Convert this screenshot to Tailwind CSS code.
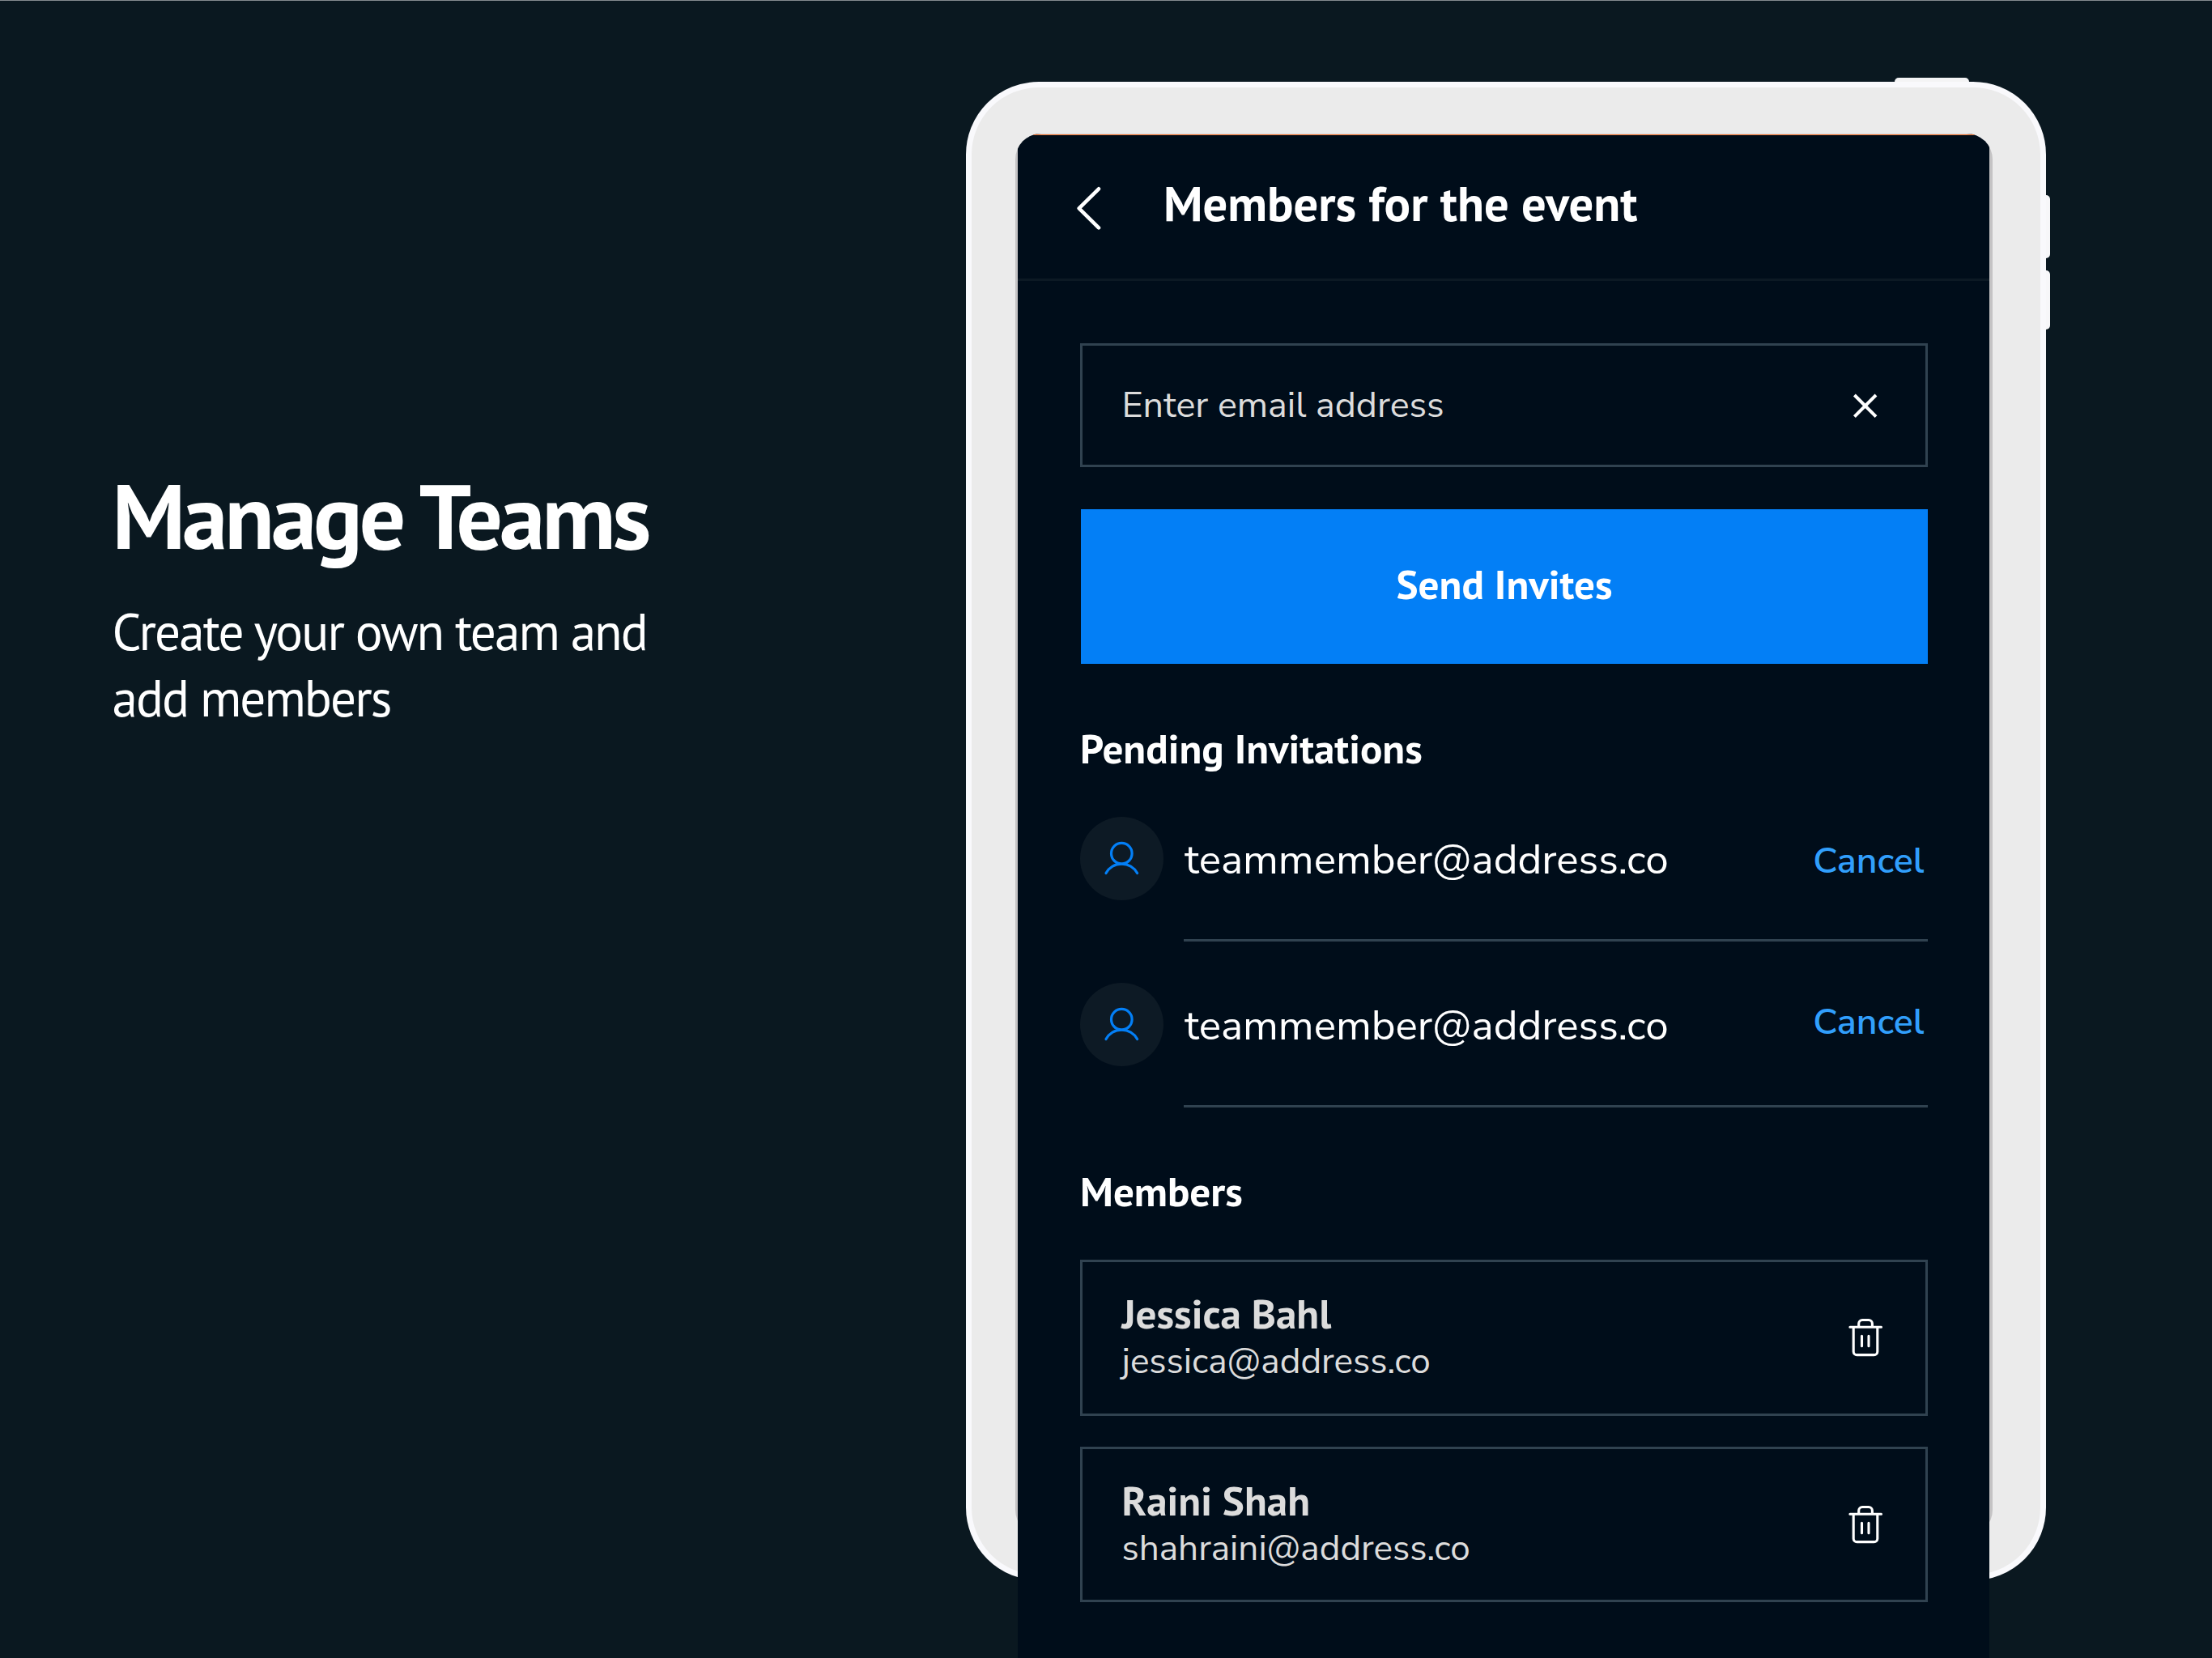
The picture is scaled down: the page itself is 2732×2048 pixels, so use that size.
<!DOCTYPE html>
<html lang="en">
<head>
<meta charset="utf-8">
<title>Manage Teams</title>
<script src="https://cdn.jsdelivr.net/npm/@tailwindcss/browser@4"></script>
</head>
<body class="bg-[#0a1820]">
<main class="relative flex h-[2048px] w-[2732px] overflow-hidden bg-[#0a1820] font-['PT_Sans','Noto_Sans',sans-serif] text-white">
  <div class="absolute inset-x-0 top-0 h-px bg-[#848b8f]"></div>

  <section class="w-[1193px] shrink-0 pt-[576px] pl-[138.5px]">
    <h1 class="text-[113.4px] leading-[120px] font-bold tracking-[-4.1px] whitespace-nowrap">Manage Teams</h1>
    <p class="mt-[43px] text-[63.3px] leading-[82px] tracking-[-2px]">Create your own team and<br>add members</p>
  </section>

  <section class="relative w-[1334px] shrink-0 pt-[165px] pl-[61px]">
    <!-- tablet body and hardware buttons -->
    <div class="absolute top-[96px] left-[1147px] h-[20px] w-[92px] rounded-t-[5px] bg-[#f4f4f5]"></div>
    <div class="absolute top-[241px] left-[1320px] h-[78px] w-[19px] rounded-r-[5px] bg-[#f7f7f9]"></div>
    <div class="absolute top-[334px] left-[1320px] h-[73px] w-[19px] rounded-r-[5px] bg-[#f7f7f9]"></div>
    <div class="absolute top-[101px] left-0 h-[1851px] w-[1334px] rounded-[90px] border-[7px] border-[#f9f9fc] bg-[#ebebeb]"></div>
    <div class="absolute top-[165px] left-[61px] h-[1732px] w-[1207px] rounded-[32px] bg-[#c4c3c4]"></div>

    <!-- screen -->
    <div class="relative h-[1883px] w-[1207px] overflow-hidden rounded-t-[32px] pl-[3px]">
      <div class="h-[1883px] w-[1200px] bg-[#000d1a]">
        <div class="h-px bg-[#d5d3d6]"></div>
        <div class="h-px bg-[#f0702a]"></div>
        <header class="flex h-[180px] items-start border-b-[3px] border-[#0c1924] pl-[67px]">
          <svg class="mt-[58px] h-[64px] w-[40px]" viewBox="0 0 40 64" fill="none" stroke="#fff" stroke-width="4.6" stroke-linecap="round" stroke-linejoin="round"><path d="M33 8.3 8.7 32.3 33 56.4"/></svg>
          <h2 class="mt-[54px] ml-[73px] text-[60.6px] leading-[60px] font-bold whitespace-nowrap">Members for the event</h2>
        </header>

        <div class="flex flex-col pt-[77px] pr-[76px] pl-[77px]">
          <div class="flex h-[153px] items-center justify-between border-[3px] border-[#304250] pr-[44px] pl-[48.5px]">
            <span class="font-['Nunito_Sans','Lato',sans-serif] text-[44.8px] leading-[60px] text-[#dcdcdc]">Enter email address</span>
            <svg class="size-[60px]" viewBox="0 0 60 60" fill="none" stroke="#fff" stroke-width="4"><path d="M16.4 17 43 43.6M43 17 16.4 43.6"/></svg>
          </div>
          <button class="mt-[52px] ml-px flex h-[191px] items-center justify-center bg-[#037ff6] pb-[7px] text-[51.1px] leading-[60px] font-bold">Send Invites</button>

          <h3 class="mt-[74px] text-[51.1px] leading-[61px] font-bold">Pending Invitations</h3>
          <div class="mt-[54px] flex flex-col gap-[51px]">
            <div class="flex h-[154px] items-start gap-[25.5px]">
              <div class="size-[102.5px] shrink-0 rounded-full bg-[#0d1a25]">
                <svg class="size-full" viewBox="0 0 102.5 102.5" fill="none" stroke="#037ff6" stroke-width="3.2" stroke-linecap="round"><circle cx="51.3" cy="45.2" r="12.8"/><path d="M32 69.6A22 22 0 0 1 70.6 69.6"/></svg>
              </div>
              <div class="flex h-[154px] grow items-start justify-between border-b-[3px] border-[#304250] pr-[4.5px] pl-px font-['Nunito_Sans','Lato',sans-serif]">
                <span class="mt-[23px] text-[51.2px] leading-[60px]">teammember@address.co</span>
                <span class="mt-[25px] text-[44.7px] leading-[60px] font-semibold text-[#319ffc]">Cancel</span>
              </div>
            </div>
            <div class="flex h-[154px] items-start gap-[25.5px]">
              <div class="size-[102.5px] shrink-0 rounded-full bg-[#0d1a25]">
                <svg class="size-full" viewBox="0 0 102.5 102.5" fill="none" stroke="#037ff6" stroke-width="3.2" stroke-linecap="round"><circle cx="51.3" cy="45.2" r="12.8"/><path d="M32 69.6A22 22 0 0 1 70.6 69.6"/></svg>
              </div>
              <div class="flex h-[154px] grow items-start justify-between border-b-[3px] border-[#304250] pr-[4.5px] pl-px font-['Nunito_Sans','Lato',sans-serif]">
                <span class="mt-[23px] text-[51.2px] leading-[60px]">teammember@address.co</span>
                <span class="mt-[19px] text-[44.7px] leading-[60px] font-semibold text-[#319ffc]">Cancel</span>
              </div>
            </div>
          </div>

          <h3 class="mt-[73.2px] text-[51.1px] leading-[61px] font-bold">Members</h3>
          <div class="mt-[54px] flex flex-col gap-[38.4px] text-[#dcdcdc]">
            <div class="flex h-[192.4px] items-center justify-between border-[3px] border-[#304250] pr-[44px] pl-[48.5px]">
              <div class="self-start pt-[33px]">
                <div class="text-[51.1px] leading-[60px] font-bold">Jessica Bahl</div>
                <div class="font-['Nunito_Sans','Lato',sans-serif] text-[44.1px] leading-[60px]">jessica@address.co</div>
              </div>
              <svg class="size-[60px]" viewBox="0 0 60 60" fill="none" stroke="#fff" stroke-width="3.1" stroke-linecap="round"><path d="M10.9 17.2H49.5M15.2 17.2V47.4a4.2 4.2 0 0 0 4.2 4.2H40.6a4.2 4.2 0 0 0 4.2-4.2V17.2M21.7 17.2V13a4.5 4.5 0 0 1 4.5-4.5h7.7a4.5 4.5 0 0 1 4.5 4.5v4.2M25.5 28.2V40.7M34 28.2V40.7"/></svg>
            </div>
            <div class="flex h-[192.4px] items-center justify-between border-[3px] border-[#304250] pr-[44px] pl-[48.5px]">
              <div class="self-start pt-[33px]">
                <div class="text-[51.1px] leading-[60px] font-bold">Raini Shah</div>
                <div class="font-['Nunito_Sans','Lato',sans-serif] text-[44.1px] leading-[60px]">shahraini@address.co</div>
              </div>
              <svg class="size-[60px]" viewBox="0 0 60 60" fill="none" stroke="#fff" stroke-width="3.1" stroke-linecap="round"><path d="M10.9 17.2H49.5M15.2 17.2V47.4a4.2 4.2 0 0 0 4.2 4.2H40.6a4.2 4.2 0 0 0 4.2-4.2V17.2M21.7 17.2V13a4.5 4.5 0 0 1 4.5-4.5h7.7a4.5 4.5 0 0 1 4.5 4.5v4.2M25.5 28.2V40.7M34 28.2V40.7"/></svg>
            </div>
          </div>
        </div>
      </div>
    </div>
  </section>
</main>
</body>
</html>
